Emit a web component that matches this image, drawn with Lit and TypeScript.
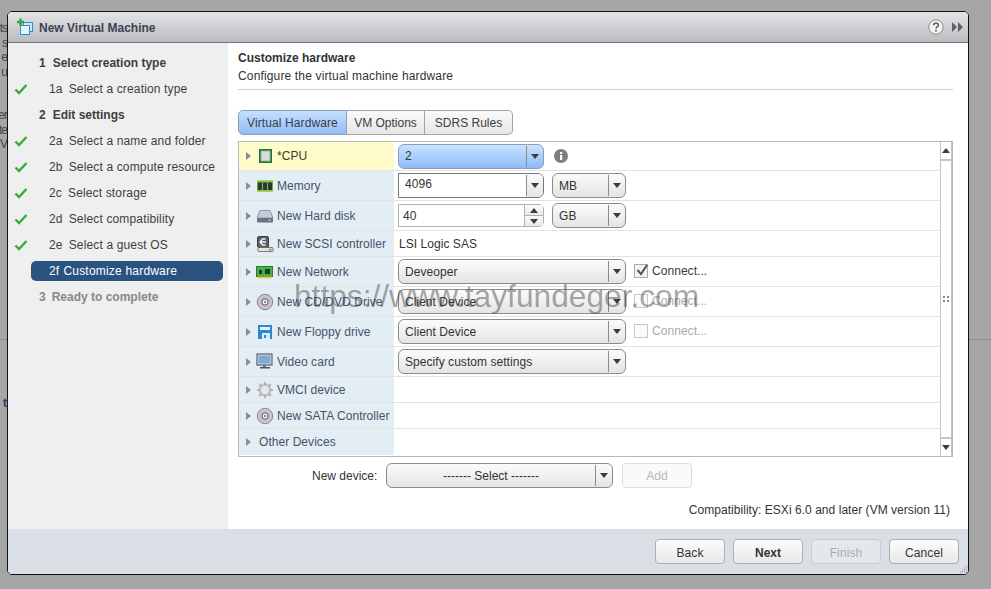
import { LitElement, html, css, svg } from "lit";
import { customElement } from "lit/decorators.js";

const icons: Record<string, unknown> = {
  cpu: svg`<svg width="18" height="16" viewBox="0 0 18 16"><rect x="3" y="1" width="13" height="14" fill="#17763a"/><rect x="5" y="3" width="9" height="10" fill="#d9dcd8" stroke="#9fb0a3"/></svg>`,
  mem: svg`<svg width="18" height="16" viewBox="0 0 18 16"><rect x="1" y="2" width="16" height="12" fill="#6aa83e"/><rect x="2" y="4.5" width="14" height="7.5" fill="#2a3a2a"/><path d="M6.5 4.5v7.5M11.5 4.5v7.5" stroke="#86a874" stroke-width="1.2"/><rect x="1" y="2" width="16" height="1.6" fill="#a6d46c"/><rect x="1" y="12.4" width="16" height="1.6" fill="#a6d46c"/></svg>`,
  disk: svg`<svg width="18" height="16" viewBox="0 0 18 16"><path d="M4 2.5h10l3 7.5H1z" fill="#c6ccd5" stroke="#8f98a5"/><rect x="1" y="10" width="16" height="4.5" rx="1" fill="#687484"/><rect x="12.5" y="11.5" width="2" height="1.5" fill="#b7dca0"/></svg>`,
  scsi: svg`<svg width="18" height="16" viewBox="0 0 18 16"><rect x="1.5" y="0.5" width="11" height="11" rx="1.5" fill="#5c5f63" stroke="#3c3e42"/><path d="M9.5 3H6.5L4 6L6.5 9h3M5 6h5" fill="none" stroke="#f4f4f4" stroke-width="1.3"/><rect x="2" y="11.5" width="15" height="4" rx="1" fill="#e4e4e4" stroke="#5c5c5c" stroke-width=".8"/><rect x="13" y="12.8" width="2.5" height="1.5" fill="#5aa02c"/></svg>`,
  net: svg`<svg width="18" height="16" viewBox="0 0 18 16"><rect x="0.5" y="2.5" width="16" height="10" fill="#45b04d" stroke="#23802f"/><rect x="3" y="6" width="3" height="4" fill="#1d3b22"/><rect x="9" y="5" width="5" height="5" fill="#1d3b22"/><rect x="2" y="12.5" width="14" height="1.8" fill="#e8c53a"/></svg>`,
  cd: svg`<svg width="18" height="18" viewBox="0 0 18 18"><circle cx="9" cy="9" r="7.7" fill="#c9c9cb" stroke="#86868a"/><circle cx="9" cy="9" r="5" fill="#c4a6d0"/><circle cx="9" cy="9" r="3" fill="#f4f4f4" stroke="#6d6d72"/><circle cx="9" cy="9" r="1.1" fill="#77777c"/></svg>`,
  floppy: svg`<svg width="18" height="16" viewBox="0 0 18 16"><rect x="2" y="1" width="14" height="14" fill="#2e86d6"/><rect x="4" y="3" width="10" height="3" fill="#e8f3fc"/><rect x="6" y="9" width="8" height="6" fill="#dcecf9"/><rect x="8" y="11" width="2" height="3" fill="#2e86d6"/></svg>`,
  video: svg`<svg width="18" height="17" viewBox="0 0 18 17"><rect x="1" y="1" width="15" height="11" fill="#cfe0f0" stroke="#3d4650"/><rect x="2.5" y="2.5" width="12" height="8" fill="#7fa8d2"/><rect x="7" y="12" width="3" height="2" fill="#6b7178"/><rect x="4" y="14" width="10" height="1.5" fill="#4c535a"/></svg>`,
  gear: svg`<svg width="18" height="18" viewBox="0 0 18 18"><circle cx="9" cy="9" r="5.2" fill="none" stroke="#c2c2c2" stroke-width="2.6"/><path d="M9 1v3M9 14v3M1 9h3M14 9h3M3.3 3.3l2.1 2.1M12.6 12.6l2.1 2.1M3.3 14.7l2.1-2.1M12.6 5.4l2.1-2.1" stroke="#b4b4b4" stroke-width="2.2"/><circle cx="9" cy="9" r="2" fill="#e8e8e8"/></svg>`,
};

const check = html`<svg class="check" width="14" height="12" viewBox="0 0 14 12"><path d="M1.5 6.5L5 10L12.5 2" fill="none" stroke="#3aa935" stroke-width="2.4"/></svg>`;
const caret = html`<svg width="8" height="5" viewBox="0 0 8 5"><path d="M0 0h8L4 5z" fill="#3c3c3c"/></svg>`;
const caretUp = html`<svg width="8" height="5" viewBox="0 0 8 5"><path d="M0 5h8L4 0z" fill="#3c3c3c"/></svg>`;

type Step = { n: string; t: string; kind: "head" | "sub" | "cur" | "off"; done?: boolean };
const steps: Step[] = [
  { n: "1", t: "Select creation type", kind: "head" },
  { n: "1a", t: "Select a creation type", kind: "sub", done: true },
  { n: "2", t: "Edit settings", kind: "head" },
  { n: "2a", t: "Select a name and folder", kind: "sub", done: true },
  { n: "2b", t: "Select a compute resource", kind: "sub", done: true },
  { n: "2c", t: "Select storage", kind: "sub", done: true },
  { n: "2d", t: "Select compatibility", kind: "sub", done: true },
  { n: "2e", t: "Select a guest OS", kind: "sub", done: true },
  { n: "2f", t: "Customize hardware", kind: "cur" },
  { n: "3", t: "Ready to complete", kind: "off" },
];

@customElement("app-root")
export class AppRoot extends LitElement {
  static styles = css`
    :host {
      display: block;
      width: 991px;
      height: 589px;
      background: #a6a6a6;
      position: relative;
      overflow: hidden;
      font: 12px "Liberation Sans", Arial, sans-serif;
      color: #333;
      padding: 11px 0 0 7px;
      box-sizing: border-box;
    }
    .behind { position: absolute; right: calc(100% - 7px); white-space: nowrap; color: #454545; font-size: 12px; letter-spacing: -1px; }
    .behind.bold { font-weight: bold; font-size: 13px; color: #23456e; letter-spacing: 0; }
    .pageline { position: absolute; left: 0; right: 0; top: 339px; height: 1px; background: #8e8e8e; }
    .dialog {
      position: relative;
      width: 962px;
      height: 564px;
      box-sizing: border-box;
      border: 1px solid #111;
      border-radius: 5px;
      overflow: hidden;
      background: #fff;
      display: flex;
      flex-direction: column;
    }
    .titlebar {
      height: 31px;
      box-sizing: border-box;
      flex: none;
      border-bottom: 1px solid #777;
      background: linear-gradient(#e2e4e8, #babcc0);
      display: flex;
      align-items: center;
      padding: 0 4px 0 9px;
      gap: 4px;
    }
    .titlebar b { font-size: 12px; color: #3d4350; flex: 1; padding-top: 1px; }
    .titlebar .tools { display: flex; align-items: center; gap: 8px; margin-top: -1px; }
    .main { flex: 1; display: flex; min-height: 0; }
    .side { width: 220px; flex: none; background: #efefef; padding-top: 7px; box-sizing: border-box; }
    .step { height: 26px; display: flex; align-items: center; position: relative; color: #3e3e3e; }
    .step .check { position: absolute; left: 6px; top: 7px; }
    .step.head { padding-left: 31px; font-weight: bold; }
    .step.head .n { margin-right: 7px; }
    .step.off { padding-left: 31px; font-weight: bold; color: #888; }
    .step.off .n { margin-right: 6px; }
    .step.sub { padding-left: 41px; letter-spacing: 0.15px; }
    .step.sub .n { margin-right: 6px; }
    .curwrap { padding-left: 23px; padding-right: 5px; }
    .step.cur { height: 20px; margin: 3px 0; background: #2b5380; color: #fff; border-radius: 5px; padding-left: 18px; letter-spacing: 0.2px; }
    .step.cur .n { margin-right: 4px; }
    .content { flex: 1; padding: 8px 15px 0 10px; min-width: 0; display: flex; flex-direction: column; }
    .heading { font-weight: bold; color: #333; line-height: 14px; }
    .sub2 { line-height: 14px; margin-top: 4px; color: #333; letter-spacing: 0.15px; }
    .rule { height: 1px; background: #d0d0d0; margin-top: 6px; }
    .tabs { display: flex; margin-top: 20px; height: 25px; width: 275px; }
    .tab {
      box-sizing: border-box;
      height: 25px;
      border: 1px solid #a3a3a3;
      border-left-width: 0;
      background: linear-gradient(#fafafa, #e6e6e6);
      display: flex; align-items: center; justify-content: center;
      color: #3c3c44;
    }
    .tab:first-child { border-left-width: 1px; border-radius: 5px 0 0 5px; background: linear-gradient(#c5e0ff, #91bcf5); border-color: #8e9eb4; letter-spacing: 0.1px; }
    .tab:last-child { border-radius: 0 5px 5px 0; }
    .table {
      margin-top: 6px;
      width: 715px;
      height: 316px;
      box-sizing: border-box;
      border: 1px solid #b8b8b8;
      display: flex;
      flex: none;
      overflow: hidden;
      letter-spacing: 0.05px;
    }
    .rows { flex: 1; min-width: 0; }
    .row { display: flex; border-bottom: 1px solid #e2e2e2; box-sizing: border-box; }
    .row:last-child { border-bottom: 0; }
    .lab {
      width: 155px; flex: none; box-sizing: border-box;
      background: #e3edf4;
      display: flex; align-items: center;
      color: #47526a;
      padding-left: 7px;
    }
    .lab.hi { background: #fffbca; color: #3a3a2a; }
    .tri { width: 0; height: 0; border-left: 5px solid #8c8c8c; border-top: 4px solid transparent; border-bottom: 4px solid transparent; margin-right: 5px; flex: none; }
    .lab.noicon .tri { margin-right: 8px; }
    .ico { width: 18px; display: flex; justify-content: center; margin-right: 3px; flex: none; }
    .val { flex: 1; display: flex; align-items: center; padding-left: 4px; gap: 8px; color: #333; min-width: 0; }
    .val .plain { padding-left: 1px; }
    .sel, .combo, .spin {
      box-sizing: border-box;
      height: 25px;
      display: flex;
      align-items: stretch;
      border: 1px solid #8b8b8b;
      border-radius: 6px;
      background: linear-gradient(#fbfbfb, #e4e4e4);
      color: #333;
    }
    .sel .txt, .combo .txt, .spin .txt { flex: 1; display: flex; align-items: center; padding-left: 6px; min-width: 0; }
    .sel .arr, .combo .arr { width: 17px; flex: none; display: flex; align-items: center; justify-content: center; position: relative; }
    .sel .arr::before, .combo .arr::before { content: ""; position: absolute; left: 0; top: 1px; bottom: 1px; width: 1px; background: #8b8b8b; }
    .sel.blue { background: linear-gradient(#c7e3ff, #8fb9f6); border-color: #8e9eb4; }
    .w146 { width: 146px; }
    .w74 { width: 74px; }
    .w228 { width: 228px; }
    .combo { background: #fff; border-radius: 0 6px 6px 0; border-color: #777; }
    .combo .txt { padding-bottom: 3px; }
    .combo .arr { background: linear-gradient(#fbfbfb, #e4e4e4); border-radius: 0 5px 5px 0; }
    .spin { background: #fff; height: 23px; border-radius: 0 5px 5px 0; border-color: #b0b0b0; }
    .spin .txt { padding-left: 4px; }
    .spin .btns { width: 18px; flex: none; display: flex; flex-direction: column; border-left: 1px solid #b0b0b0; }
    .spin .btns span { flex: 1; display: flex; align-items: center; justify-content: center; background: linear-gradient(#fbfbfb, #e8e8e8); }
    .spin .btns span + span { border-top: 1px solid #b0b0b0; }
    .cb { display: flex; align-items: center; gap: 4px; margin-bottom: 1px; color: #3a3a44; }
    .cb.dis { color: #aaa; }
    .box { width: 12px; height: 12px; border: 1px solid #aaa; background: #f4f4f4; position: relative; }
    .cb.dis .box { border-color: #c8c8c8; background: #fbfbfb; }
    .box svg { position: absolute; left: 0; top: -2px; }
    .info { margin-left: 2px; }
    .scroll { width: 12px; flex: none; box-sizing: border-box; padding: 0 1px; display: flex; flex-direction: column; gap: 2px; background: #c4c4c4; }
    .scroll .b { height: 17px; display: flex; align-items: center; justify-content: center; flex: none; background: #fff; }
    .scroll .t { flex: 1; display: flex; align-items: center; justify-content: center; background: #fff; }
    .newdev { display: flex; align-items: center; margin-top: 6px; height: 25px; padding-left: 74px; }
    .newdev label { width: 74px; color: #333; }
    .newdev .sel { width: 227px; }
    .newdev .sel .txt { justify-content: center; padding-left: 0; }
    .btn {
      box-sizing: border-box; width: 70px; height: 25px;
      border: 1px solid #b0b0b0; border-radius: 4px;
      background: linear-gradient(#fcfcfc, #e8e8e8);
      display: flex; align-items: center; justify-content: center;
      color: #333;
    }
    .btn.add { margin-left: 9px; background: #fafafa; border-color: #ddd; color: #b8b8b8; }
    .compat { text-align: right; padding-right: 3px; margin-top: 15px; line-height: 14px; color: #333; letter-spacing: 0.04px; }
    .foot { height: 45px; flex: none; box-sizing: border-box; background: #dadee5; display: flex; justify-content: flex-end; align-items: center; gap: 8px; padding: 0 9px 0 0; letter-spacing: 0.1px; }
    .foot .btn { padding-top: 2px; }
    .foot .next { font-weight: bold; letter-spacing: 0; }
    .foot .dis { background: #e4e7ec; border-color: #c8ccd2; color: #a9adb3; }
    .grab { position: absolute; right: 0; bottom: 0; width: 10px; height: 10px; }
    .mark {
      position: absolute; left: 294px; top: 277px;
      font-size: 31.7px; line-height: 38px;
      color: rgba(60,60,60,.45);
      white-space: nowrap;
      pointer-events: none;
    }
  `;

  row(h: number, icon: string | null, label: string, body: unknown, hi = false) {
    return html`<div class="row" style="height:${h}px">
      <div class="lab ${hi ? "hi" : ""} ${icon ? "" : "noicon"}"><span class="tri"></span>${icon ? html`<span class="ico">${icons[icon]}</span>` : ""}<span>${label}</span></div>
      <div class="val">${body}</div>
    </div>`;
  }

  sel(text: string, cls: string) {
    return html`<div class="sel ${cls}"><span class="txt">${text}</span><span class="arr">${caret}</span></div>`;
  }

  cb(checked: boolean) {
    return html`<div class="cb ${checked ? "" : "dis"}"><span class="box">${checked ? html`<svg width="14" height="14" viewBox="0 0 14 14"><path d="M2.5 7L6 11L12 2" fill="none" stroke="#555" stroke-width="2"/></svg>` : ""}</span>Connect...</div>`;
  }

  step(s: Step) {
    const inner = html`<div class="step ${s.kind}">${s.done ? check : ""}<span class="n">${s.n}</span><span>${s.t}</span></div>`;
    return s.kind === "cur" ? html`<div class="curwrap">${inner}</div>` : inner;
  }

  render() {
    return html`
      <span class="behind" style="top:21px">ts</span>
      <span class="behind" style="top:36px">s</span>
      <span class="behind" style="top:50px">e</span>
      <span class="behind" style="top:65px">u</span>
      <span class="behind" style="top:108px">er</span>
      <span class="behind" style="top:123px">te</span>
      <span class="behind" style="top:137px">V</span>
      <span class="behind bold" style="top:395px">t</span>
      <div class="pageline"></div>
      <div class="dialog">
        <div class="titlebar">
          <svg width="18" height="18" viewBox="0 0 18 18">
            <rect x="6.5" y="4.5" width="9" height="9" fill="#cfe6f7" stroke="#2f8fc7"/>
            <rect x="3.5" y="7.5" width="9" height="9" fill="#e7f4fc" stroke="#2f8fc7"/>
            <path d="M3.5 0.5v7M0 4h7" stroke="#2fa84a" stroke-width="2.4"/>
          </svg>
          <b>New Virtual Machine</b>
          <div class="tools">
            <svg width="16" height="16" viewBox="0 0 16 16"><circle cx="8" cy="8" r="7.2" fill="#f2f2f2" stroke="#8c8c8c"/><path d="M5.6 6.2C5.7 3.4 10.4 3.4 10.4 6C10.4 7.8 8 7.6 8 9.6" fill="none" stroke="#6a6a6a" stroke-width="1.7"/><rect x="7.1" y="10.8" width="1.8" height="1.8" fill="#6a6a6a"/></svg>
            <svg width="12" height="10" viewBox="0 0 12 10"><path d="M0 0l5 5l-5 5zM6 0l5 5l-5 5z" fill="#5f6268"/></svg>
          </div>
        </div>
        <div class="main">
          <div class="side">${steps.map((s) => this.step(s))}</div>
          <div class="content">
            <div class="heading">Customize hardware</div>
            <div class="sub2">Configure the virtual machine hardware</div>
            <div class="rule"></div>
            <div class="tabs">
              <div class="tab" style="width:109px">Virtual Hardware</div>
              <div class="tab" style="width:78px">VM Options</div>
              <div class="tab" style="width:88px">SDRS Rules</div>
            </div>
            <div class="table">
              <div class="rows">
                ${this.row(29, "cpu", "*CPU", html`${this.sel("2", "blue w146")}<svg class="info" width="14" height="14" viewBox="0 0 14 14"><circle cx="7" cy="7" r="7" fill="#7f7f7f"/><rect x="6" y="6" width="2.2" height="5" fill="#fff"/><rect x="6" y="3" width="2.2" height="2" fill="#fff"/></svg>`, true)}
                ${this.row(30, "mem", "Memory", html`<div class="combo w146"><span class="txt">4096</span><span class="arr">${caret}</span></div>${this.sel("MB", "w74")}`)}
                ${this.row(30, "disk", "New Hard disk", html`<div class="spin w146"><span class="txt">40</span><span class="btns"><span>${caretUp}</span><span>${caret}</span></span></div>${this.sel("GB", "w74")}`)}
                ${this.row(26, "scsi", "New SCSI controller", html`<span class="plain">LSI Logic SAS</span>`)}
                ${this.row(30, "net", "New Network", html`${this.sel("Deveoper", "w228")}${this.cb(true)}`)}
                ${this.row(30, "cd", "New CD/DVD Drive", html`${this.sel("Client Device", "w228")}${this.cb(false)}`)}
                ${this.row(30, "floppy", "New Floppy drive", html`${this.sel("Client Device", "w228")}${this.cb(false)}`)}
                ${this.row(30, "video", "Video card", html`${this.sel("Specify custom settings", "w228")}`)}
                ${this.row(26, "gear", "VMCI device", "")}
                ${this.row(26, "cd", "New SATA Controller", "")}
                ${this.row(26, null, "Other Devices", "")}
              </div>
              <div class="scroll">
                <div class="b">${caretUp}</div>
                <div class="t"><svg width="6" height="6" viewBox="0 0 6 6"><path d="M0 0h2v2H0zM4 0h2v2H4zM0 4h2v2H0zM4 4h2v2H4z" fill="#858585"/></svg></div>
                <div class="b">${caret}</div>
              </div>
            </div>
            <div class="newdev">
              <label>New device:</label>
              ${this.sel("------- Select -------", "")}
              <div class="btn add">Add</div>
            </div>
            <div class="compat">Compatibility: ESXi 6.0 and later (VM version 11)</div>
          </div>
        </div>
        <div class="foot">
          <div class="btn">Back</div>
          <div class="btn next">Next</div>
          <div class="btn dis">Finish</div>
          <div class="btn">Cancel</div>
        </div>
        <svg class="grab" viewBox="0 0 10 10"><path d="M8 2h1M6 4h1M8 4h1M4 6h1M6 6h1M8 6h1M2 8h1M4 8h1M6 8h1M8 8h1" stroke="#8a8a8a" stroke-width="1"/></svg>
      </div>
      <div class="mark">https://www.tayfundeger.com</div>
    `;
  }
}
